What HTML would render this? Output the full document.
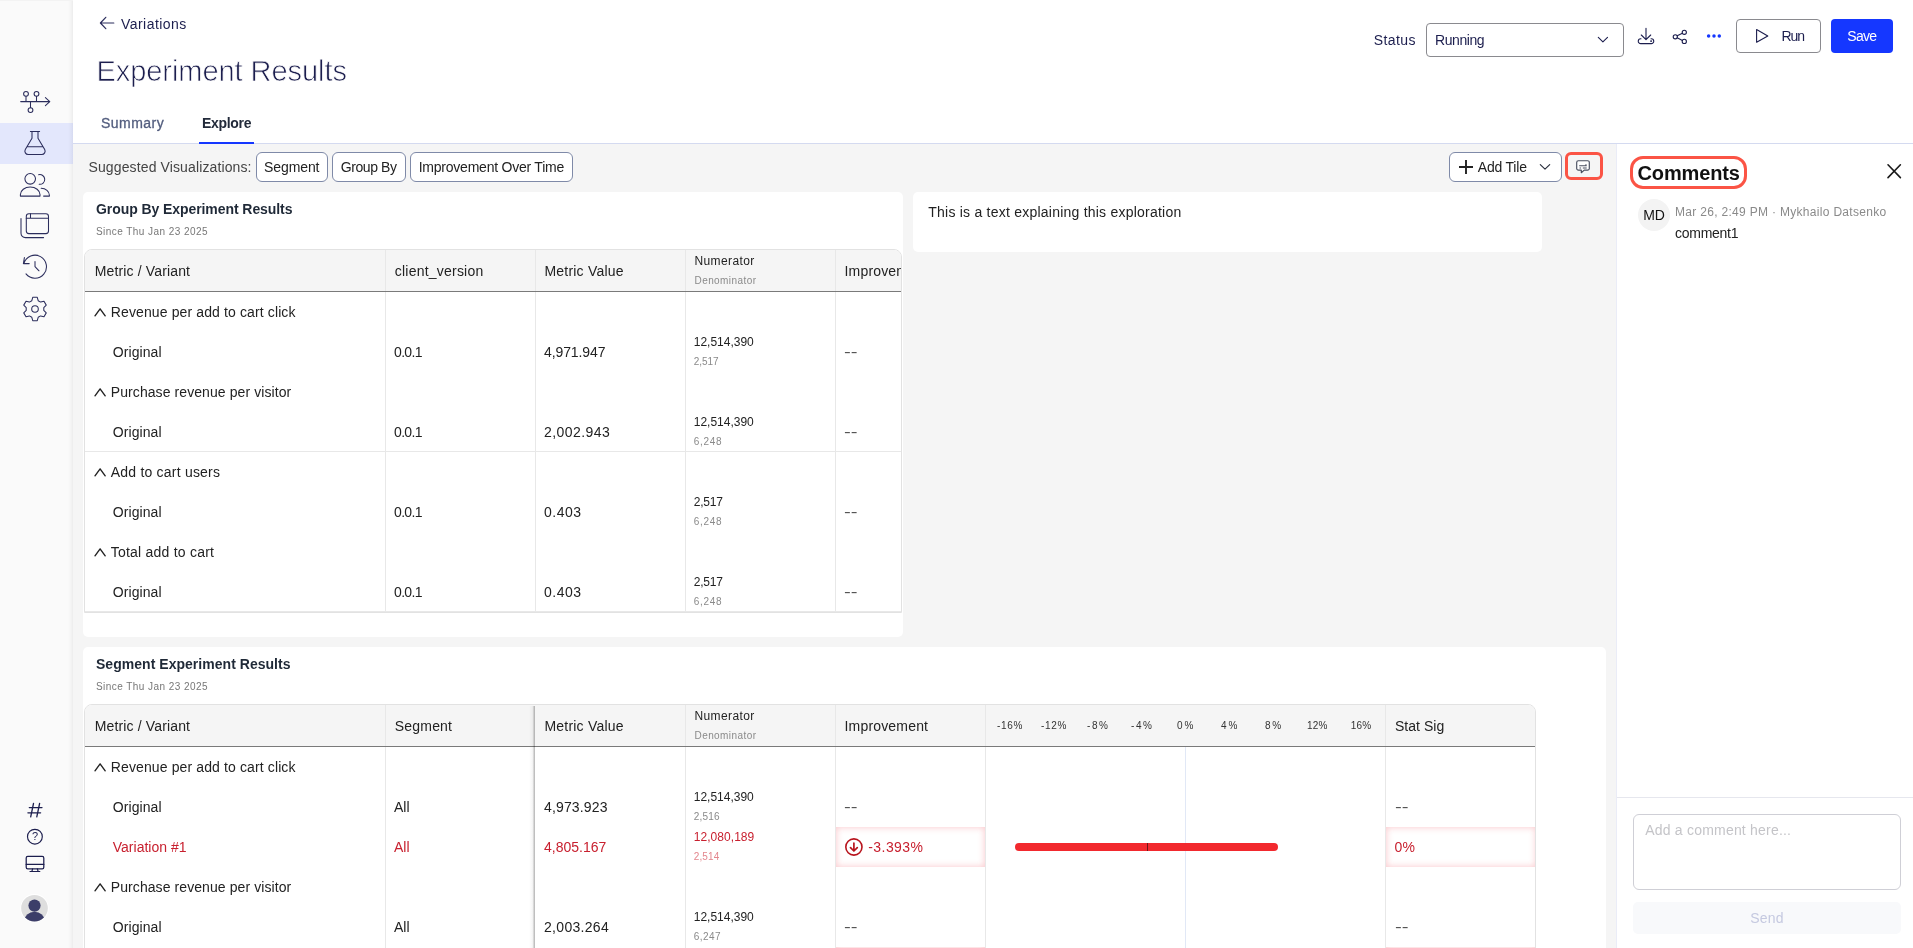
<!DOCTYPE html>
<html lang="en">
<head>
<meta charset="utf-8">
<title>Experiment Results</title>
<style>
*{box-sizing:border-box;margin:0;padding:0}
html,body{width:1913px;height:948px;overflow:hidden;background:#f5f5f5}
body{font-family:"Liberation Sans",sans-serif;font-size:14px;color:#222;position:relative}
.a{position:absolute}
.t{position:absolute;white-space:pre;line-height:1}
svg{position:absolute;overflow:visible}
.ic{fill:none;stroke:#2b2d5c;stroke-width:1.05;stroke-linecap:round;stroke-linejoin:round}
.ic2{fill:none;stroke:#1c1e4e;stroke-width:1.2;stroke-linecap:round;stroke-linejoin:round}
.btn{position:absolute;border:1px solid #8a8a8f;border-radius:4px;background:#fff}
.chip{position:absolute;border:1px solid #7f8aa8;border-radius:6px;background:#fff;height:30px;top:152px}
.tile{position:absolute;background:#fff;border-radius:5px}
.tbl{position:absolute;border:1px solid #e2e2e2;border-radius:8px 8px 0 0;background:#fff;overflow:hidden}
.th{position:absolute;left:0;top:0;height:41px;width:100%;background:#f5f5f5}
.hb{position:absolute;left:0;top:41px;height:1px;width:100%;background:#7a7a7a}
.vl{position:absolute;width:1px;background:#e8e8e8;top:0;bottom:0}
.hl{position:absolute;height:1px;background:#e8e8e8;left:0;right:0}
.hi{position:absolute;background:#fff;box-shadow:inset 0 0 7px 0 rgba(238,40,55,.27)}
.chev{fill:none;stroke:#222;stroke-width:1.4;stroke-linecap:round;stroke-linejoin:round}
</style>
</head>
<body>
<!-- ======= header ======= -->
<div class="a" style="left:72px;top:0;width:1841px;height:144px;background:#fff;border-bottom:1px solid #d4daf0"></div>
<div class="a" style="left:199px;top:142px;width:55px;height:2px;background:#1537ff"></div>
<!-- back arrow -->
<svg style="left:98px;top:16px" width="18" height="16" viewBox="98 16 18 16"><path class="ic" style="stroke:#2b2d5c;stroke-width:1.2" d="M113.8 23H100.8M105.8 17.3L100.4 23L105.8 28.7"/></svg>
<!-- status select -->
<div class="btn" style="left:1426px;top:23px;width:198px;height:34px"></div>
<svg style="left:1596px;top:35px" width="14" height="9" viewBox="1596 35 14 9"><path class="ic2" style="stroke-width:1.1" d="M1598.3 37.3L1602.9 41.8L1607.5 37.3"/></svg>
<!-- download icon -->
<svg style="left:1636px;top:26px" width="20" height="20" viewBox="1636 26 20 20"><path class="ic2" style="stroke-width:1.1" d="M1646 28.3V39.5M1641.3 35L1646 39.7L1650.7 35M1641 38.7H1640.7A2.4 2.4 0 0 0 1640.7 43.6H1651.3A2.4 2.4 0 0 0 1651.3 38.7H1651"/><circle cx="1651.1" cy="41.1" r=".95" fill="#1c1e4e"/></svg>
<!-- share icon -->
<svg style="left:1671px;top:28px" width="18" height="18" viewBox="1671 28 18 18"><g class="ic2" style="stroke-width:1.1"><circle cx="1684.3" cy="32.3" r="2.1"/><circle cx="1684.3" cy="41.4" r="2.1"/><circle cx="1675.3" cy="36.8" r="2.1"/><path d="M1677.2 35.8L1682.4 33.2M1677.2 37.8L1682.4 40.4"/></g></svg>
<!-- dots -->
<svg style="left:1705px;top:32px" width="18" height="8" viewBox="1705 32 18 8"><g fill="#1537ff"><circle cx="1708.6" cy="36" r="1.75"/><circle cx="1714" cy="36" r="1.75"/><circle cx="1719.3" cy="36" r="1.75"/></g></svg>
<!-- run / save -->
<div class="btn" style="left:1736px;top:19px;width:85px;height:34px"></div>
<svg style="left:1755px;top:28px" width="15" height="16" viewBox="1755 28 15 16"><path class="ic2" style="stroke-width:1.1" d="M1756.6 29.6V42.3L1767.8 35.9Z"/></svg>
<div class="a" style="left:1831px;top:19px;width:62px;height:34px;border-radius:4px;background:#1537ff"></div>

<!-- ======= toolbar ======= -->
<div class="chip" style="left:256px;width:72px"></div>
<div class="chip" style="left:332px;width:74px"></div>
<div class="chip" style="left:410px;width:163px"></div>
<div class="chip" style="left:1449px;width:113px"></div>
<svg style="left:1457px;top:159px" width="18" height="16" viewBox="1457 159 18 16"><path d="M1459 167H1473M1466 160V174" fill="none" stroke="#222" stroke-width="1.9"/></svg>
<svg style="left:1538px;top:163px" width="14" height="9" viewBox="1538 163 14 9"><path class="chev" style="stroke-width:1.15;stroke:#2a2f3d" d="M1540.3 164.6L1545 169.2L1549.7 164.6"/></svg>
<!-- comment icon button (highlighted) -->
<div class="a" style="left:1565px;top:152px;width:38px;height:28px;border:3px solid #fb5445;border-radius:6px;background:#f5f5f5"></div>
<svg style="left:1575px;top:159px" width="17" height="16" viewBox="1575 159 17 16"><path d="M1578.4 160.7H1587.6A1.7 1.7 0 0 1 1589.3 162.4V168.4A1.7 1.7 0 0 1 1587.6 170.1H1584.2L1581.3 172.7V170.1H1578.4A1.7 1.7 0 0 1 1576.7 168.4V162.4A1.7 1.7 0 0 1 1578.4 160.7Z" fill="#fff" stroke="#474d5e" stroke-width="1.15" stroke-linejoin="round"/><path d="M1579.2 165.2H1586.7V166.2H1579.2ZM1579.5 167.5H1581.1V168.4H1579.5ZM1582.8 167.5H1586.7V168.4H1582.8ZM1585.4 164.3H1586.5V165.2H1585.4Z" fill="#474d5e"/></svg>

<!-- ======= tile 1 ======= -->
<div class="tile" style="left:83px;top:192px;width:820px;height:445px"></div>
<div class="tbl" style="left:84px;top:249px;width:818px;height:364px">
  <div class="th"></div>
  <div class="vl" style="left:300px"></div><div class="vl" style="left:450px"></div><div class="vl" style="left:600px"></div><div class="vl" style="left:750px"></div>
  <div class="hl" style="top:201px"></div><div class="hl" style="top:361px"></div><div class="hb"></div>
</div>
<!-- text tile -->
<div class="tile" style="left:913px;top:192px;width:629px;height:60px"></div>

<!-- ======= tile 2 ======= -->
<div class="tile" style="left:83px;top:647px;width:1523px;height:320px"></div>
<div class="tbl" style="left:84px;top:704px;width:1452px;height:260px">
  <div class="th"></div>
  <div class="vl" style="left:300px"></div><div class="vl" style="left:600px"></div><div class="vl" style="left:750px"></div><div class="vl" style="left:900px"></div><div class="vl" style="left:1300px"></div>
  <div class="vl" style="left:1100px;top:42px;background:#e1e8f6"></div>
  <div class="hb"></div>
  <!-- pinned col shadow -->
  <div class="a" style="left:444px;top:1px;bottom:0;width:6px;background:linear-gradient(90deg,rgba(0,0,0,0) 0,rgba(0,0,0,.03) 50%,rgba(0,0,0,.06) 66%,rgba(0,0,0,.14) 67%,rgba(0,0,0,.16) 83%,rgba(0,0,0,.25) 84%,rgba(0,0,0,.25) 100%)"></div>
  <!-- highlights -->
  <div class="hi" style="left:751px;top:122px;width:149px;height:40px"></div>
  <div class="hi" style="left:1301px;top:122px;width:150px;height:40px"></div>
  <div class="hi" style="left:751px;top:242px;width:149px;height:40px"></div>
  <div class="hi" style="left:1301px;top:242px;width:150px;height:40px"></div>
  <!-- CI bar -->
  <div class="a" style="left:930px;top:138px;width:263px;height:8px;border-radius:4px;background:#f2292e"></div>
  <div class="a" style="left:1061.5px;top:138px;width:1px;height:8px;background:#6d1518"></div>
</div>
<!-- down-arrow-in-circle -->
<svg style="left:844px;top:838px" width="19" height="19" viewBox="844 838 19 19"><circle cx="853.9" cy="847" r="8.1" fill="none" stroke="#b8141d" stroke-width="1.6"/><path d="M853.9 843.2V850.6M850.5 847.6L853.9 851L857.3 847.6" fill="none" stroke="#b8141d" stroke-width="1.7" stroke-linecap="round" stroke-linejoin="round"/></svg>
<!-- chevrons -->
<svg style="left:0;top:0" width="1" height="1"><g class="chev">
<path d="M95 315.8L100.1 308.9L105.2 315.8"/><path d="M95 395.8L100.1 388.9L105.2 395.8"/><path d="M95 475.8L100.1 468.9L105.2 475.8"/><path d="M95 555.8L100.1 548.9L105.2 555.8"/><path d="M95 770.8L100.1 763.9L105.2 770.8"/><path d="M95 890.8L100.1 883.9L105.2 890.8"/>
</g></svg>

<!-- ======= comments panel ======= -->
<div class="a" style="left:1616px;top:144px;width:297px;height:804px;background:#fff;border-left:1px solid #eaecf7"></div>
<div class="a" style="left:1630px;top:156px;width:117px;height:33px;border:3px solid #fb5445;border-radius:13px"></div>
<svg style="left:1886px;top:163px" width="16" height="16" viewBox="1886 163 16 16"><path d="M1888 164.8L1900.4 177.6M1900.4 164.8L1888 177.6" stroke="#1a1a1a" stroke-width="1.6" stroke-linecap="round"/></svg>
<div class="a" style="left:1638px;top:199px;width:32px;height:32px;border-radius:50%;background:#f3f3f3"></div>
<div class="a" style="left:1617px;top:797px;width:296px;height:1px;background:#e6e7ee"></div>
<div class="a" style="left:1633px;top:814px;width:268px;height:76px;border:1px solid #cfcfd6;border-radius:6px;background:#fff"></div>
<div class="a" style="left:1633px;top:902px;width:268px;height:32px;border-radius:5px;background:#f8f9fb"></div>

<!-- ======= sidebar ======= -->
<div class="a" style="left:0;top:0;width:73px;height:948px;background:linear-gradient(90deg,#fafafa 0,#fafafa 68px,#f4f4f4 71px,#ececec 73px);border-top:1px solid #f3f3f3"></div>
<div class="a" style="left:0;top:123px;width:73px;height:41px;background:linear-gradient(90deg,#e3e7fc 0,#e3e7fc 68px,#dde1f6 71px,#d6daf0 73px)"></div>
<svg style="left:0;top:0" width="72" height="948" viewBox="0 0 72 948">
<g class="ic">
<!-- roadmap -->
<path d="M20.7 101.6H49.6M45.4 97.6L49.8 101.6L45.4 105.6M26 96.3V101.6M36.5 96.3V101.6M30.5 101.6V107.6"/>
<circle cx="26" cy="93.8" r="2.4"/><circle cx="36.5" cy="93.8" r="2.4"/><circle cx="30.5" cy="110.1" r="2.4"/>
<!-- flask -->
<path d="M30.4 131.4H39.6M32 131.4V138.2L25.3 149.6A3.3 3.3 0 0 0 28.2 154.5H41.8A3.3 3.3 0 0 0 44.7 149.6L38 138.2V131.4M27.3 146.7H42.7"/>
<!-- users -->
<circle cx="30.2" cy="178.8" r="5.3"/>
<path d="M20.4 196.1V194.6A9.8 7.6 0 0 1 40 194.6V196.1Z"/>
<path d="M38.6 174.7A4.9 4.9 0 1 1 39.2 184.3M41.2 188.3A8.2 7 0 0 1 49.4 195.3V196.1H43.6"/>
<!-- windows -->
<rect x="26.3" y="213.8" width="22.2" height="19.8" rx="2.6"/>
<path d="M26.3 218.3H48.5M30.5 213.8V218.3M21 218.6V233.2A4.4 4.4 0 0 0 25.4 237.6H43.6"/>
<!-- history -->
<path d="M24 263.2A11.5 11.5 0 1 1 26 273.9M24.4 257.6L23.4 263.6L29.2 263.6M35 261.6V266.6L39 270.8"/>
<!-- gear (path inserted by generator) -->
<path d="M38.19 300.69L37.27 297.32L32.73 297.32L31.81 300.69L29.40 302.08L26.02 301.19L23.75 305.13L26.21 307.61L26.21 310.39L23.75 312.87L26.02 316.81L29.40 315.92L31.81 317.31L32.73 320.68L37.27 320.68L38.19 317.31L40.60 315.92L43.98 316.81L46.25 312.87L43.79 310.39L43.79 307.61L46.25 305.13L43.98 301.19L40.60 302.08Z"/>
<circle cx="35" cy="309" r="3.3"/>
</g>
<g class="ic2" style="stroke-width:1.3">
<path d="M33.5 803.5L30.7 816.9M39.6 803.5L36.8 816.9M29.3 807.6H42M27.9 812.8H40.6"/>
<circle cx="34.9" cy="836.7" r="7.4" style="stroke-width:1.15"/>
<rect x="26.2" y="856.4" width="17.6" height="12.4" rx="1.6" style="stroke-width:1.25"/>
<path style="stroke-width:1.2" d="M26.2 864.4H43.8M32.6 868.8L31.9 871.4M37.4 868.8L38.1 871.4M30 871.5H39.8"/>
</g>
<circle cx="34.5" cy="908.2" r="14.2" fill="#fff"/>
<circle cx="34.5" cy="908.2" r="13.3" fill="#dedede"/>
<clipPath id="avc"><circle cx="34.5" cy="908.2" r="13.3"/></clipPath>
<g clip-path="url(#avc)" fill="#3c3e69"><circle cx="34.5" cy="905.6" r="6.1"/><ellipse cx="34.5" cy="921.5" rx="10.4" ry="9.8"/></g>
</svg>
<div id="txt" class="a" style="left:0;top:0;width:1913px;height:948px;will-change:transform">
<span class="t" style="left:31.9px;top:831.2px;font-size:11px;color:#1c1e4e">?</span>
<span class="t" style="left:121.00px;top:17.00px;font-size:14px;color:#1c1e4e;letter-spacing:0.448px;">Variations</span>
<span class="t" style="left:96.40px;top:57.00px;font-size:29px;color:#1c1e4e;letter-spacing:-0.049px;-webkit-text-stroke:0.75px #fff;">Experiment Results</span>
<span class="t" style="left:101.00px;top:116.00px;font-size:14px;color:#525d7e;letter-spacing:0.474px;-webkit-text-stroke:0.3px #525d7e;">Summary</span>
<span class="t" style="left:202.00px;top:116.00px;font-size:14px;color:#222a3a;font-weight:700;letter-spacing:-0.310px;">Explore</span>
<span class="t" style="left:1373.70px;top:33.00px;font-size:14px;color:#1c1e4e;letter-spacing:0.419px;">Status</span>
<span class="t" style="left:1435.10px;top:33.00px;font-size:14px;color:#1c1e4e;letter-spacing:-0.459px;">Running</span>
<span class="t" style="left:1781.50px;top:29.00px;font-size:14px;color:#1c1e4e;letter-spacing:-1.044px;">Run</span>
<span class="t" style="left:1847.30px;top:29.00px;font-size:14px;color:#ffffff;letter-spacing:-0.741px;">Save</span>
<span class="t" style="left:88.50px;top:160.00px;font-size:14px;color:#444444;letter-spacing:0.122px;">Suggested Visualizations:</span>
<span class="t" style="left:264.00px;top:160.00px;font-size:14px;color:#222222;letter-spacing:-0.091px;">Segment</span>
<span class="t" style="left:340.75px;top:160.00px;font-size:14px;color:#222222;letter-spacing:-0.413px;">Group By</span>
<span class="t" style="left:418.70px;top:160.00px;font-size:14px;color:#222222;letter-spacing:-0.228px;">Improvement Over Time</span>
<span class="t" style="left:1477.75px;top:160.00px;font-size:14px;color:#222222;letter-spacing:-0.192px;">Add Tile</span>
<span class="t" style="left:96.00px;top:202.00px;font-size:14px;color:#1f2937;font-weight:700;letter-spacing:-0.073px;">Group By Experiment Results</span>
<span class="t" style="left:96.00px;top:227.00px;font-size:10px;color:#777777;letter-spacing:0.441px;">Since Thu Jan 23 2025</span>
<span class="t" style="left:928.25px;top:205.00px;font-size:14px;color:#222222;letter-spacing:0.230px;">This is a text explaining this exploration</span>
<span class="t" style="left:94.75px;top:264.00px;font-size:14px;color:#222222;letter-spacing:0.143px;">Metric / Variant</span>
<span class="t" style="left:394.75px;top:264.00px;font-size:14px;color:#222222;letter-spacing:0.222px;">client_version</span>
<span class="t" style="left:544.50px;top:264.00px;font-size:14px;color:#222222;letter-spacing:0.202px;">Metric Value</span>
<span class="t" style="left:694.50px;top:255.00px;font-size:12px;color:#222222;letter-spacing:0.383px;">Numerator</span>
<span class="t" style="left:694.50px;top:276.00px;font-size:10px;color:#8a8a8a;letter-spacing:0.423px;">Denominator</span>
<div class="a" style="left:835px;top:250px;width:66px;height:40px;overflow:hidden"><span class="t" style="left:9.50px;top:14.00px;font-size:14px;color:#222222;letter-spacing:0.180px;">Improvement</span></div>
<span class="t" style="left:94.75px;top:719.00px;font-size:14px;color:#222222;letter-spacing:0.143px;">Metric / Variant</span>
<span class="t" style="left:394.75px;top:719.00px;font-size:14px;color:#222222;letter-spacing:0.201px;">Segment</span>
<span class="t" style="left:544.50px;top:719.00px;font-size:14px;color:#222222;letter-spacing:0.202px;">Metric Value</span>
<span class="t" style="left:694.50px;top:710.00px;font-size:12px;color:#222222;letter-spacing:0.383px;">Numerator</span>
<span class="t" style="left:694.50px;top:731.00px;font-size:10px;color:#8a8a8a;letter-spacing:0.423px;">Denominator</span>
<span class="t" style="left:844.50px;top:719.00px;font-size:14px;color:#222222;letter-spacing:0.180px;">Improvement</span>
<span class="t" style="left:1395.00px;top:719.00px;font-size:14px;color:#222222;letter-spacing:0.031px;">Stat Sig</span>
<span class="t" style="left:110.75px;top:305.00px;font-size:14px;color:#222222;letter-spacing:0.122px;">Revenue per add to cart click</span>
<span class="t" style="left:110.75px;top:385.00px;font-size:14px;color:#222222;letter-spacing:0.085px;">Purchase revenue per visitor</span>
<span class="t" style="left:110.75px;top:465.00px;font-size:14px;color:#222222;letter-spacing:0.214px;">Add to cart users</span>
<span class="t" style="left:110.75px;top:545.00px;font-size:14px;color:#222222;letter-spacing:0.227px;">Total add to cart</span>
<span class="t" style="left:112.75px;top:345.00px;font-size:14px;color:#222222;letter-spacing:0.071px;">Original</span>
<span class="t" style="left:394.00px;top:345.00px;font-size:14px;color:#222222;letter-spacing:-0.660px;">0.0.1</span>
<span class="t" style="left:544.00px;top:345.00px;font-size:14px;color:#222222;letter-spacing:-0.100px;">4,971.947</span>
<span class="t" style="left:693.75px;top:336.00px;font-size:12px;color:#222222;letter-spacing:-0.007px;">12,514,390</span>
<span class="t" style="left:693.75px;top:357.00px;font-size:10px;color:#8a8a8a;letter-spacing:-0.070px;">2,517</span>
<span class="t" style="left:844.00px;top:345.00px;font-size:14px;color:#555555;display:inline-block;transform-origin:0 0;transform:scaleX(1.45);">--</span>
<span class="t" style="left:112.75px;top:425.00px;font-size:14px;color:#222222;letter-spacing:0.071px;">Original</span>
<span class="t" style="left:394.00px;top:425.00px;font-size:14px;color:#222222;letter-spacing:-0.660px;">0.0.1</span>
<span class="t" style="left:544.00px;top:425.00px;font-size:14px;color:#222222;letter-spacing:0.432px;">2,002.943</span>
<span class="t" style="left:693.75px;top:416.00px;font-size:12px;color:#222222;letter-spacing:-0.007px;">12,514,390</span>
<span class="t" style="left:693.75px;top:437.00px;font-size:10px;color:#8a8a8a;letter-spacing:0.680px;">6,248</span>
<span class="t" style="left:844.00px;top:425.00px;font-size:14px;color:#555555;display:inline-block;transform-origin:0 0;transform:scaleX(1.45);">--</span>
<span class="t" style="left:112.75px;top:505.00px;font-size:14px;color:#222222;letter-spacing:0.071px;">Original</span>
<span class="t" style="left:394.00px;top:505.00px;font-size:14px;color:#222222;letter-spacing:-0.660px;">0.0.1</span>
<span class="t" style="left:544.00px;top:505.00px;font-size:14px;color:#222222;letter-spacing:0.488px;">0.403</span>
<span class="t" style="left:693.75px;top:496.00px;font-size:12px;color:#222222;letter-spacing:-0.195px;">2,517</span>
<span class="t" style="left:693.75px;top:517.00px;font-size:10px;color:#8a8a8a;letter-spacing:0.680px;">6,248</span>
<span class="t" style="left:844.00px;top:505.00px;font-size:14px;color:#555555;display:inline-block;transform-origin:0 0;transform:scaleX(1.45);">--</span>
<span class="t" style="left:112.75px;top:585.00px;font-size:14px;color:#222222;letter-spacing:0.071px;">Original</span>
<span class="t" style="left:394.00px;top:585.00px;font-size:14px;color:#222222;letter-spacing:-0.660px;">0.0.1</span>
<span class="t" style="left:544.00px;top:585.00px;font-size:14px;color:#222222;letter-spacing:0.488px;">0.403</span>
<span class="t" style="left:693.75px;top:576.00px;font-size:12px;color:#222222;letter-spacing:-0.195px;">2,517</span>
<span class="t" style="left:693.75px;top:597.00px;font-size:10px;color:#8a8a8a;letter-spacing:0.680px;">6,248</span>
<span class="t" style="left:844.00px;top:585.00px;font-size:14px;color:#555555;display:inline-block;transform-origin:0 0;transform:scaleX(1.45);">--</span>
<span class="t" style="left:96.00px;top:657.00px;font-size:14px;color:#1f2937;font-weight:700;letter-spacing:0.031px;">Segment Experiment Results</span>
<span class="t" style="left:96.00px;top:682.00px;font-size:10px;color:#777777;letter-spacing:0.441px;">Since Thu Jan 23 2025</span>
<span class="t" style="left:110.75px;top:760.00px;font-size:14px;color:#222222;letter-spacing:0.122px;">Revenue per add to cart click</span>
<span class="t" style="left:110.75px;top:880.00px;font-size:14px;color:#222222;letter-spacing:0.085px;">Purchase revenue per visitor</span>
<span class="t" style="left:112.75px;top:800.00px;font-size:14px;color:#222222;letter-spacing:0.071px;">Original</span>
<span class="t" style="left:394.00px;top:800.00px;font-size:14px;color:#222222;letter-spacing:-0.031px;">All</span>
<span class="t" style="left:544.00px;top:800.00px;font-size:14px;color:#222222;letter-spacing:0.150px;">4,973.923</span>
<span class="t" style="left:693.75px;top:791.00px;font-size:12px;color:#222222;letter-spacing:-0.007px;">12,514,390</span>
<span class="t" style="left:693.75px;top:812.00px;font-size:10px;color:#8a8a8a;letter-spacing:0.180px;">2,516</span>
<span class="t" style="left:844.00px;top:800.00px;font-size:14px;color:#555555;display:inline-block;transform-origin:0 0;transform:scaleX(1.45);">--</span>
<span class="t" style="left:1394.50px;top:800.00px;font-size:14px;color:#555555;display:inline-block;transform-origin:0 0;transform:scaleX(1.45);">--</span>
<span class="t" style="left:112.75px;top:840.00px;font-size:14px;color:#c8202f;letter-spacing:0.006px;">Variation #1</span>
<span class="t" style="left:394.00px;top:840.00px;font-size:14px;color:#c8202f;letter-spacing:-0.031px;">All</span>
<span class="t" style="left:544.00px;top:840.00px;font-size:14px;color:#c8202f;letter-spacing:-0.006px;">4,805.167</span>
<span class="t" style="left:693.75px;top:831.00px;font-size:12px;color:#c8202f;letter-spacing:0.049px;">12,080,189</span>
<span class="t" style="left:693.75px;top:852.00px;font-size:10px;color:#e3868d;letter-spacing:0.117px;">2,514</span>
<span class="t" style="left:112.75px;top:920.00px;font-size:14px;color:#222222;letter-spacing:0.071px;">Original</span>
<span class="t" style="left:394.00px;top:920.00px;font-size:14px;color:#222222;letter-spacing:-0.031px;">All</span>
<span class="t" style="left:544.00px;top:920.00px;font-size:14px;color:#222222;letter-spacing:0.307px;">2,003.264</span>
<span class="t" style="left:693.75px;top:911.00px;font-size:12px;color:#222222;letter-spacing:-0.007px;">12,514,390</span>
<span class="t" style="left:693.75px;top:932.00px;font-size:10px;color:#8a8a8a;letter-spacing:0.430px;">6,247</span>
<span class="t" style="left:844.00px;top:920.00px;font-size:14px;color:#555555;display:inline-block;transform-origin:0 0;transform:scaleX(1.45);">--</span>
<span class="t" style="left:1394.50px;top:920.00px;font-size:14px;color:#555555;display:inline-block;transform-origin:0 0;transform:scaleX(1.45);">--</span>
<span class="t" style="left:868.25px;top:840.00px;font-size:14px;color:#c8202f;letter-spacing:0.432px;">-3.393%</span>
<span class="t" style="left:1394.50px;top:840.00px;font-size:14px;color:#c8202f;letter-spacing:0.266px;">0%</span>
<span class="t" style="left:997.00px;top:721.00px;font-size:10px;color:#333333;letter-spacing:0.714px;">-16%</span>
<span class="t" style="left:1041.00px;top:721.00px;font-size:10px;color:#333333;letter-spacing:0.714px;">-12%</span>
<span class="t" style="left:1087.00px;top:721.00px;font-size:10px;color:#333333;letter-spacing:1.602px;">-8%</span>
<span class="t" style="left:1131.00px;top:721.00px;font-size:10px;color:#333333;letter-spacing:1.602px;">-4%</span>
<span class="t" style="left:1177.00px;top:721.00px;font-size:10px;color:#333333;letter-spacing:2.047px;">0%</span>
<span class="t" style="left:1221.00px;top:721.00px;font-size:10px;color:#333333;letter-spacing:2.047px;">4%</span>
<span class="t" style="left:1265.00px;top:721.00px;font-size:10px;color:#333333;letter-spacing:1.797px;">8%</span>
<span class="t" style="left:1307.00px;top:721.00px;font-size:10px;color:#333333;letter-spacing:0.242px;">12%</span>
<span class="t" style="left:1350.75px;top:721.00px;font-size:10px;color:#333333;letter-spacing:0.242px;">16%</span>
<span class="t" style="left:1637.50px;top:163.00px;font-size:20px;color:#111111;font-weight:700;letter-spacing:-0.123px;">Comments</span>
<span class="t" style="left:1643.25px;top:208.00px;font-size:14px;color:#111111;letter-spacing:-0.281px;">MD</span>
<span class="t" style="left:1675.00px;top:206.00px;font-size:12px;color:#8a8a8a;letter-spacing:0.309px;">Mar 26, 2:49 PM · Mykhailo Datsenko</span>
<span class="t" style="left:1675.00px;top:226.00px;font-size:14px;color:#222222;letter-spacing:-0.266px;">comment1</span>
<span class="t" style="left:1645.25px;top:823.00px;font-size:14px;color:#c4c4c8;letter-spacing:0.205px;">Add a comment here...</span>
<span class="t" style="left:1750.25px;top:911.00px;font-size:14px;color:#c5c9e0;letter-spacing:0.182px;">Send</span>
</div>

</body>
</html>
